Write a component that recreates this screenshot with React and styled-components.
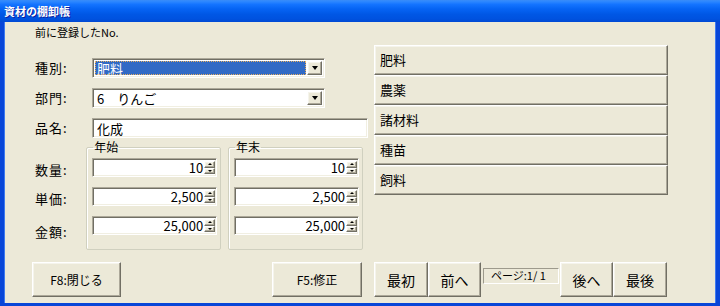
import React from "react";
import styled, { createGlobalStyle } from "styled-components";

const GlobalStyle = createGlobalStyle`
  html, body {
    margin: 0;
    padding: 0;
    background: #ffffff;
  }
  body {
    font-family: "Noto Sans CJK JP", "Noto Sans", sans-serif;
  }
`;

const categories = ["肥料", "農薬", "諸材料", "種苗", "飼料"];

const amounts = [
  { label: "数量:", start: "10", end: "10", drop: 0 },
  { label: "単価:", start: "2,500", end: "2,500", drop: 0 },
  { label: "金額:", start: "25,000", end: "25,000", drop: 4 },
];

const App = () => {
  return (
    <>
      <GlobalStyle />
      <Window>
        <TitleBar>資材の棚卸帳</TitleBar>
        <Body>
          <LeftPane>
            <Note>前に登録したNo.</Note>
            <FieldRow $top={18}>
              <Label>種別:</Label>
              <Combo>
                <ComboText $selected>肥料</ComboText>
                <ArrowButton>
                  <DownTriangle />
                </ArrowButton>
              </Combo>
            </FieldRow>
            <FieldRow $top={10}>
              <Label>部門:</Label>
              <Combo>
                <ComboText>6　りんご</ComboText>
                <ArrowButton>
                  <DownTriangle />
                </ArrowButton>
              </Combo>
            </FieldRow>
            <FieldRow $top={10}>
              <Label>品名:</Label>
              <TextBox>化成</TextBox>
            </FieldRow>

            <AmountSection>
              <AmountLabels>
                {amounts.map((a) => (
                  <AmountLabel key={a.label} $drop={a.drop}>
                    {a.label}
                  </AmountLabel>
                ))}
              </AmountLabels>
              <Group $width={137}>
                <Legend>年始</Legend>
                {amounts.map((a) => (
                  <SpinField key={a.label} value={a.start} />
                ))}
              </Group>
              <Group $width={137}>
                <Legend>年末</Legend>
                {amounts.map((a) => (
                  <SpinField key={a.label} value={a.end} />
                ))}
              </Group>
            </AmountSection>
          </LeftPane>

          <RightPane>
            {categories.map((c) => (
              <CategoryButton key={c}>{c}</CategoryButton>
            ))}
          </RightPane>

          <LeftFooter>
            <ActionButton $width={89}>F8:閉じる</ActionButton>
            <ActionButton $width={90}>F5:修正</ActionButton>
          </LeftFooter>

          <RightFooter>
            <NavButton $width={54}>最初</NavButton>
            <NavButton $width={53}>前へ</NavButton>
            <PageSlot>
              <PageInfo>ページ:1/ 1</PageInfo>
            </PageSlot>
            <NavButton $width={53}>後へ</NavButton>
            <NavButton $width={54}>最後</NavButton>
          </RightFooter>
        </Body>
      </Window>
    </>
  );
};

const SpinField = ({ value }) => (
  <SpinBox>
    <SpinValue>{value}</SpinValue>
    <Spinner>
      <SpinHalf>
        <UpTriangle />
      </SpinHalf>
      <SpinHalf>
        <SmallDownTriangle />
      </SpinHalf>
    </Spinner>
  </SpinBox>
);

export default App;

const raised = `
  border: 1px solid;
  border-color: #ffffff #716f64 #716f64 #ffffff;
  box-shadow: inset -1px -1px #aca899, inset 1px 1px #f5f4ec;
  background: #ece9d8;
`;

const sunken = `
  border: 1px solid;
  border-color: #aca899 #ffffff #ffffff #aca899;
  box-shadow: inset 1px 1px #716f64, inset -1px -1px #f1efe2;
`;

const Window = styled.div`
  width: 720px;
  height: 306px;
  display: flex;
  flex-direction: column;
  background: #ece9d8;
  overflow: hidden;
`;

const TitleBar = styled.div`
  height: 22px;
  box-sizing: border-box;
  padding: 3px 0 0 4px;
  color: #ffffff;
  font-size: 11px;
  font-weight: 700;
  line-height: 16px;
  text-shadow: 1px 1px #0a1fa0;
  background: linear-gradient(
    #3a8cf8 0%,
    #2b86ff 8%,
    #1474ff 20%,
    #0664f4 40%,
    #0057e5 65%,
    #0052df 85%,
    #0049d4 100%
  );
`;

const Body = styled.div`
  flex: 1;
  display: grid;
  grid-template-columns: 366px 294px;
  grid-template-rows: 236px 35px;
  column-gap: 4px;
  row-gap: 4px;
  align-content: start;
  border-style: solid;
  border-color: #0846d8;
  border-width: 0 4px 3px 4px;
  box-shadow: inset 1px 0 #3d7af0, inset -1px 0 #3d7af0;
`;

const LeftPane = styled.div`
  display: flex;
  flex-direction: column;
  padding-left: 31px;
`;

const Note = styled.div`
  margin-top: 2px;
  font-size: 11px;
  line-height: 16px;
  color: #000000;
`;

const FieldRow = styled.div`
  display: flex;
  align-items: center;
  height: 20px;
  margin-top: ${(p) => p.$top}px;
`;

const Label = styled.div`
  width: 57px;
  font-size: 13px;
  letter-spacing: 1px;
  line-height: 20px;
  color: #000000;
`;

const Combo = styled.div`
  ${sunken};
  width: 233px;
  height: 20px;
  box-sizing: border-box;
  display: flex;
  align-items: stretch;
  padding: 2px;
  background: #ffffff;
`;

const ComboText = styled.div`
  flex: 1;
  font-size: 13px;
  line-height: 16px;
  padding-left: 2px;
  color: ${(p) => (p.$selected ? "#ffffff" : "#000000")};
  background: ${(p) => (p.$selected ? "#316ac5" : "transparent")};
  outline: ${(p) => (p.$selected ? "1px dotted #e8b060" : "none")};
  outline-offset: -1px;
  margin-right: 1px;
`;

const ArrowButton = styled.div`
  ${raised};
  width: 15px;
  box-sizing: border-box;
  display: flex;
  align-items: center;
  justify-content: center;
`;

const DownTriangle = styled.span`
  width: 0;
  height: 0;
  border-left: 3.5px solid transparent;
  border-right: 3.5px solid transparent;
  border-top: 4px solid #000000;
`;

const TextBox = styled.div`
  ${sunken};
  width: 276px;
  height: 20px;
  box-sizing: border-box;
  padding: 1px 4px;
  font-size: 13px;
  line-height: 17px;
  background: #ffffff;
  color: #000000;
`;

const AmountSection = styled.div`
  display: flex;
  margin-top: 2px;
`;

const AmountLabels = styled.div`
  width: 52px;
  display: flex;
  flex-direction: column;
  gap: 10px;
  padding-top: 20px;
`;

const AmountLabel = styled.div`
  height: 19px;
  font-size: 13px;
  letter-spacing: 1px;
  line-height: 19px;
  color: #000000;
  margin-top: ${(p) => p.$drop}px;
  margin-bottom: ${(p) => -p.$drop}px;
`;

const Group = styled.fieldset`
  width: ${(p) => p.$width}px;
  box-sizing: border-box;
  margin: 0 7px 0 0;
  padding: 4px 5px 10px 5px;
  min-width: 0;
  border: 1px solid #d0d0bf;
  border-radius: 2px;
  box-shadow: inset 1px 1px #ffffff;
  display: flex;
  flex-direction: column;
  gap: 10px;
  height: 110px;
`;

const Legend = styled.legend`
  padding: 0 1px;
  margin-left: 1px;
  font-size: 12px;
  line-height: 14px;
  color: #000000;
`;

const SpinBox = styled.div`
  ${sunken};
  width: 125px;
  height: 19px;
  box-sizing: border-box;
  display: flex;
  align-items: stretch;
  padding: 2px 1px 2px 2px;
  background: #ffffff;
`;

const SpinValue = styled.div`
  flex: 1;
  text-align: right;
  font-size: 13px;
  line-height: 14px;
  padding-right: 1px;
  color: #000000;
`;

const Spinner = styled.div`
  width: 11px;
  display: flex;
  flex-direction: column;
`;

const SpinHalf = styled.div`
  flex: 1;
  ${raised};
  box-sizing: border-box;
  display: flex;
  align-items: center;
  justify-content: center;
`;

const UpTriangle = styled.span`
  width: 0;
  height: 0;
  border-left: 2px solid transparent;
  border-right: 2px solid transparent;
  border-bottom: 2px solid #000000;
`;

const SmallDownTriangle = styled.span`
  width: 0;
  height: 0;
  border-left: 2px solid transparent;
  border-right: 2px solid transparent;
  border-top: 2px solid #000000;
`;

const RightPane = styled.div`
  display: flex;
  flex-direction: column;
  padding-top: 23px;
`;

const CategoryButton = styled.div`
  ${raised};
  height: 30px;
  box-sizing: border-box;
  padding-left: 5px;
  font-size: 13px;
  line-height: 28px;
  color: #000000;
`;

const LeftFooter = styled.div`
  display: flex;
  justify-content: space-between;
  padding: 0 8px 0 28px;
`;

const ActionButton = styled.div`
  ${raised};
  width: ${(p) => p.$width}px;
  height: 35px;
  box-sizing: border-box;
  display: flex;
  align-items: center;
  justify-content: center;
  font-size: 12px;
  color: #000000;
`;

const RightFooter = styled.div`
  display: flex;
  align-items: flex-start;
`;

const NavButton = styled.div`
  ${raised};
  width: ${(p) => p.$width}px;
  height: 35px;
  box-sizing: border-box;
  display: flex;
  align-items: center;
  justify-content: center;
  font-size: 14px;
  color: #000000;
`;

const PageSlot = styled.div`
  width: 79px;
  padding: 6px 1px 0 2px;
  box-sizing: border-box;
`;

const PageInfo = styled.div`
  height: 16px;
  box-sizing: border-box;
  border-top: 1px solid #9d9a8c;
  border-left: 1px solid #9d9a8c;
  border-bottom: 1px solid #ffffff;
  border-right: 1px solid #ffffff;
  padding-left: 7px;
  font-size: 11px;
  line-height: 13px;
  color: #000000;
`;
